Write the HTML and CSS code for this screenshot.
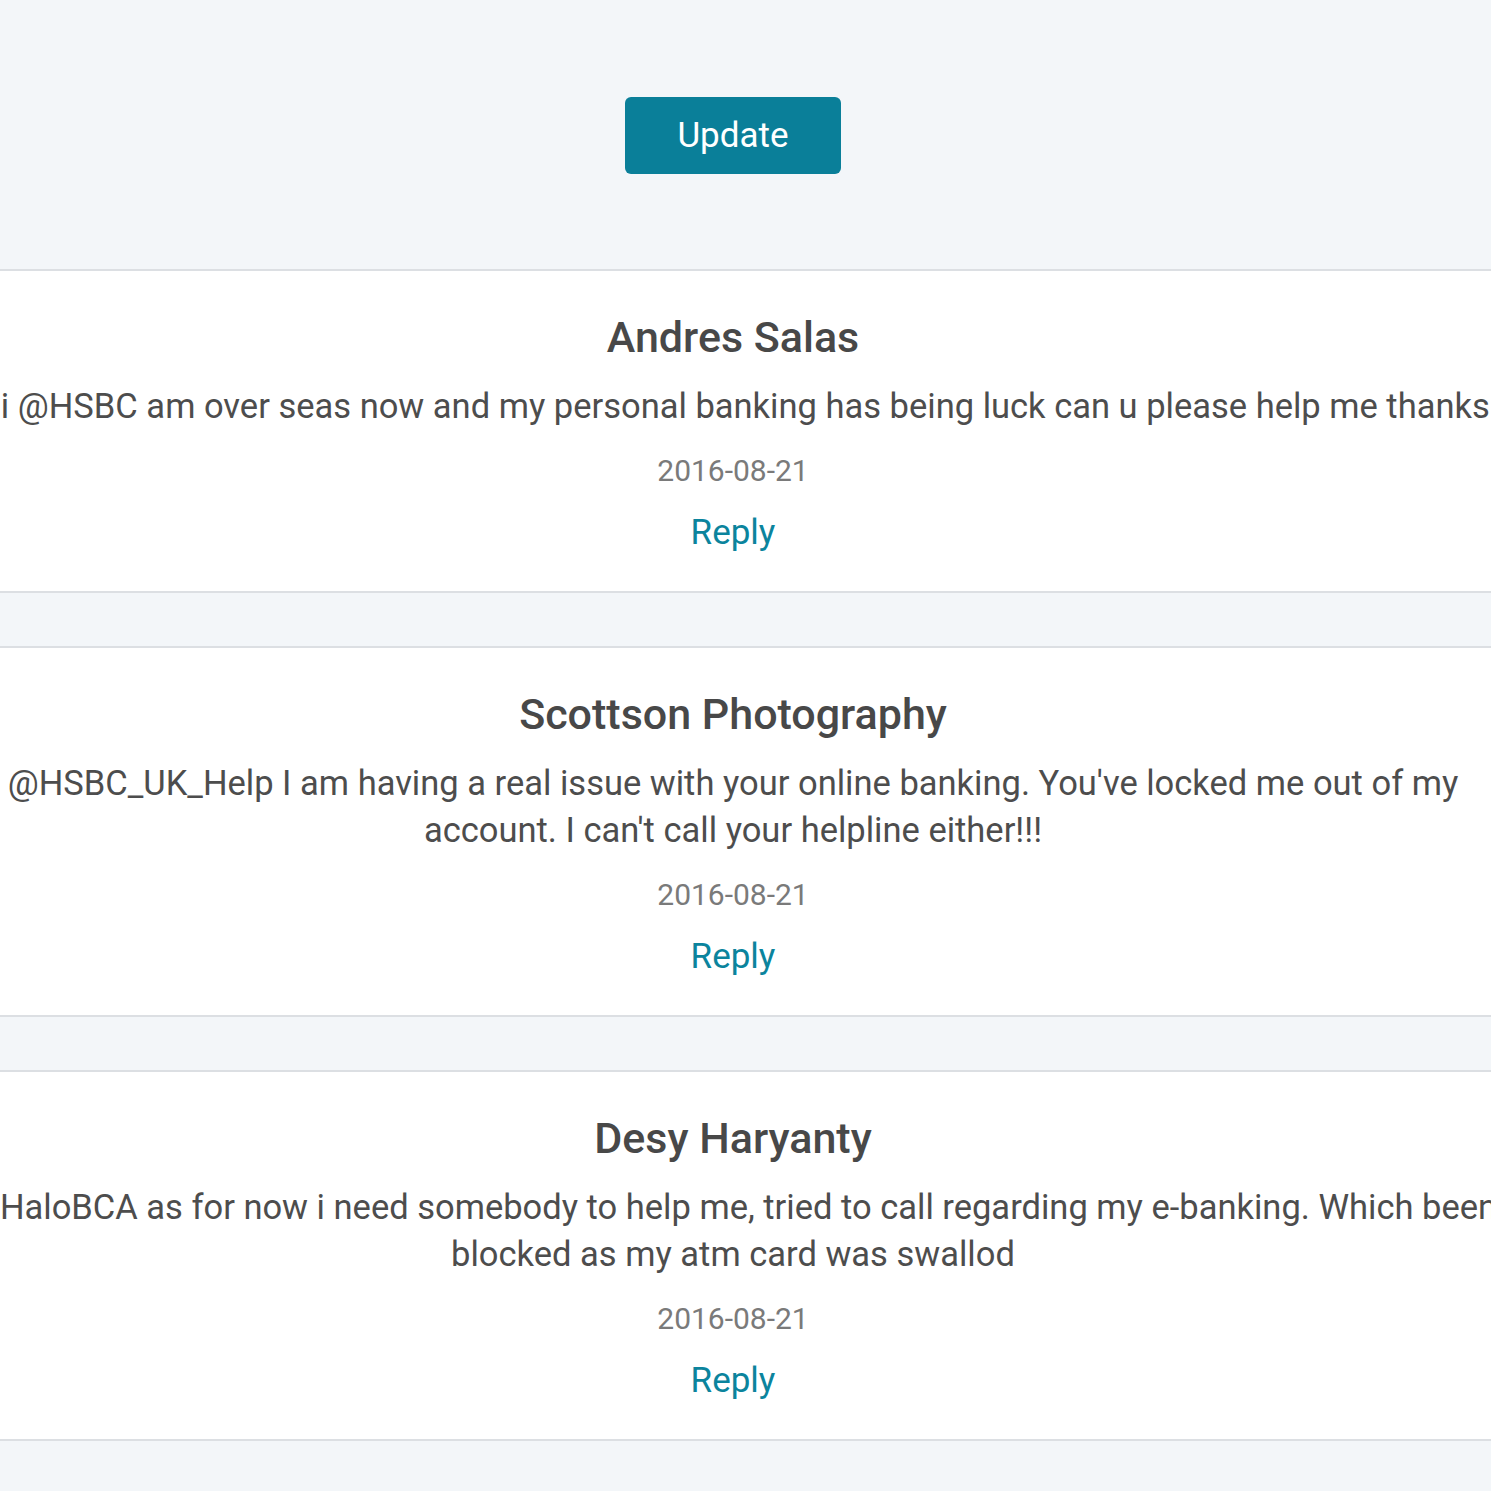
FILE: index.html
```html
<!DOCTYPE html>
<html>
<head>
<meta charset="utf-8">
<link rel="stylesheet" href="styles.css">
</head>
<body>
<div class="page">
  <div class="top">
    <button class="update-btn">Update</button>
  </div>
  <div class="card">
    <div class="name">Andres Salas</div>
    <div class="msg">Hi @HSBC am over seas now and my personal banking has being luck can u please help me thanks</div>
    <div class="date">2016-08-21</div>
    <div class="reply">Reply</div>
  </div>
  <div class="card">
    <div class="name">Scottson Photography</div>
    <div class="msg">@HSBC_UK_Help I am having a real issue with your online banking. You've locked me out of my account. I can't call your helpline either!!!</div>
    <div class="date">2016-08-21</div>
    <div class="reply">Reply</div>
  </div>
  <div class="card">
    <div class="name">Desy Haryanty</div>
    <div class="msg">@HaloBCA as for now i need somebody to help me, tried to call regarding my e-banking. Which been blocked as my atm card was swallod</div>
    <div class="date">2016-08-21</div>
    <div class="reply">Reply</div>
  </div>
</div>
</body>
</html>
```

FILE: styles.css
```css
html, body {
  margin: 0;
  padding: 0;
  background: #f3f6f9;
  overflow: hidden;
}
.page {
  width: 1491px;
  font-family: Roboto, "Liberation Sans", sans-serif;
  overflow: hidden;
}
.top {
  height: 269px;
  display: flex;
  justify-content: center;
  align-items: flex-start;
  padding-right: 25px;
  box-sizing: border-box;
}
.update-btn {
  margin-top: 97px;
  width: 216px;
  height: 77px;
  border: none;
  border-radius: 6px;
  background: #0a7f99;
  color: #ffffff;
  font-family: Roboto, "Liberation Sans", sans-serif;
  font-size: 35px;
  font-weight: 400;
  line-height: 77px;
  padding: 0 0 3px 0;
}
.card {
  background: #ffffff;
  border-top: 2px solid #dcdfe3;
  border-bottom: 2px solid #dcdfe3;
  margin-bottom: 53px;
  padding-top: 41px;
  padding-bottom: 37px;
  display: flex;
  flex-direction: column;
  align-items: flex-start;
}
.card > div {
  width: 1550px;
  margin-left: -42px;
  text-align: center;
  flex-shrink: 0;
}
.name {
  font-size: 43px;
  font-weight: 500;
  line-height: 50px;
  color: #484848;
}
.msg {
  margin-top: 21px;
  font-size: 34.5px;
  line-height: 47px;
  color: #4d4d4d;
}
.date {
  margin-top: 22px;
  font-size: 30px;
  line-height: 38px;
  color: #7a7a7a;
}
.reply {
  margin-top: 22px;
  font-size: 35px;
  line-height: 42px;
  color: #0b849d;
}
```
